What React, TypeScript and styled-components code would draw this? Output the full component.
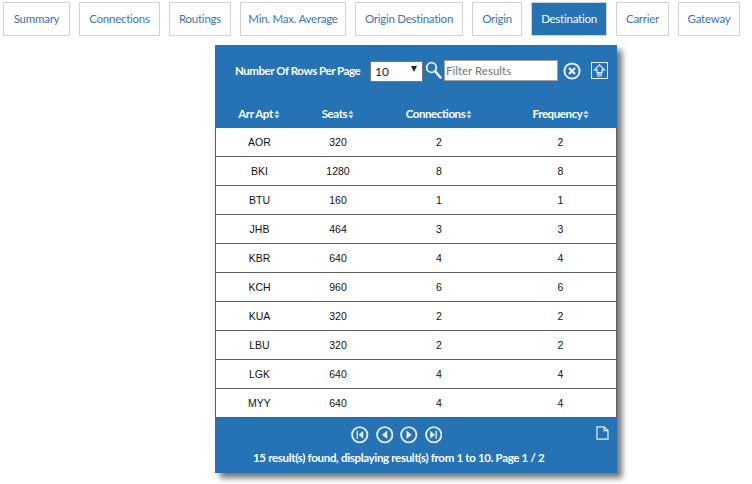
import styled, { createGlobalStyle } from "styled-components";

const tabs = [
  { label: "Summary", width: 67 },
  { label: "Connections", width: 81 },
  { label: "Routings", width: 62 },
  { label: "Min. Max. Average", width: 106 },
  { label: "Origin Destination", width: 108 },
  { label: "Origin", width: 50 },
  { label: "Destination", width: 76 },
  { label: "Carrier", width: 53 },
  { label: "Gateway", width: 62 },
];

const rows = [
  ["AOR", "320", "2", "2"],
  ["BKI", "1280", "8", "8"],
  ["BTU", "160", "1", "1"],
  ["JHB", "464", "3", "3"],
  ["KBR", "640", "4", "4"],
  ["KCH", "960", "6", "6"],
  ["KUA", "320", "2", "2"],
  ["LBU", "320", "2", "2"],
  ["LGK", "640", "4", "4"],
  ["MYY", "640", "4", "4"],
];

const SortIcon = () => (
  <SortSvg viewBox="0 0 6 9" width="6" height="9">
    <path d="M3 0.5 L5.6 3.8 H0.4 Z M3 8.5 L0.4 5.2 H5.6 Z" fill="#d5e3f0" />
  </SortSvg>
);

const PagerIcon = ({ kind }: { kind: "first" | "prev" | "next" | "last" }) => (
  <svg viewBox="0 0 18 18" width="17.5" height="17.5" fill="none">
    <circle cx="9" cy="9" r="7.9" stroke="#e6eff7" strokeWidth="1.9" />
    {kind === "first" && <path d="M5.8 5 V13 H7.2 V5 Z M12.6 4.8 L7.8 9 L12.6 13.2 Z" fill="#e6eff7" />}
    {kind === "prev" && <path d="M11.6 4.6 L6.2 9 L11.6 13.4 Z" fill="#e6eff7" />}
    {kind === "next" && <path d="M6.6 4.6 L12 9 L6.6 13.4 Z" fill="#e6eff7" />}
    {kind === "last" && <path d="M12.2 5 V13 H10.8 V5 Z M5.4 4.8 L10.2 9 L5.4 13.2 Z" fill="#e6eff7" />}
  </svg>
);

export default function App() {
  return (
    <>
      <GlobalStyle />
      <TabBar>
        {tabs.map((t) => (
          <Tab key={t.label} $w={t.width} $active={t.label === "Destination"}>
            {t.label}
          </Tab>
        ))}
      </TabBar>
      <Panel>
        <Toolbar>
          <RowsLabel>Number Of Rows Per Page</RowsLabel>
          <SelectWrap>
            <RowsSelect defaultValue="10">
              <option>10</option>
              <option>25</option>
              <option>50</option>
            </RowsSelect>
            <SelectArrow />
          </SelectWrap>
          <SearchSvg viewBox="0 0 17 18" width="17" height="18" fill="none">
            <circle cx="6.5" cy="6.5" r="4.8" stroke="#e6eff7" strokeWidth="1.8" />
            <path d="M10 10.2 L15.5 16.5" stroke="#e6eff7" strokeWidth="2.6" strokeLinecap="round" />
          </SearchSvg>
          <FilterInput placeholder="Filter Results" />
          <ClearSvg viewBox="0 0 18 18" width="18" height="18" fill="none">
            <circle cx="9" cy="9" r="7.6" stroke="#e6eff7" strokeWidth="2" />
            <path d="M6 6 L12 12 M12 6 L6 12" stroke="#e6eff7" strokeWidth="2.4" />
          </ClearSvg>
          <ExportSvg viewBox="0 0 17 17" width="17" height="17" fill="none">
            <rect x="0.5" y="0.5" width="16" height="16" stroke="#e6eff7" />
            <path d="M8.5 2.8 L13.5 7.8 H11 V10.6 H6 V7.8 H3.5 Z" stroke="#e6eff7" strokeWidth="1.2" />
            <path d="M6 12.2 H11 M6 14 H11" stroke="#e6eff7" strokeWidth="1.2" />
          </ExportSvg>
        </Toolbar>
        <DataTable>
          <colgroup>
            <col style={{ width: 88 }} />
            <col style={{ width: 70 }} />
            <col style={{ width: 132 }} />
            <col />
          </colgroup>
          <thead>
            <tr>
              {["Arr Apt", "Seats", "Connections", "Frequency"].map((h) => (
                <HeadCell key={h}>
                  {h}
                  <SortIcon />
                </HeadCell>
              ))}
            </tr>
          </thead>
          <tbody>
            {rows.map((r) => (
              <tr key={r[0]}>
                {r.map((c, i) => (
                  <BodyCell key={i}>{c}</BodyCell>
                ))}
              </tr>
            ))}
          </tbody>
        </DataTable>
        <Footer>
          <Pager>
            <PagerIcon kind="first" />
            <PagerIcon kind="prev" />
            <PagerIcon kind="next" />
            <PagerIcon kind="last" />
          </Pager>
          <FileSvg viewBox="0 0 13 14" width="13" height="14" fill="none">
            <path d="M1 0.8 H8 L12 4.6 V13.2 H1 Z" stroke="#e6eff7" strokeWidth="1.2" />
            <path d="M8 0.8 V4.6 H12" stroke="#e6eff7" strokeWidth="1.2" />
          </FileSvg>
          <ResultText>15 result(s) found, displaying result(s) from 1 to 10. Page 1 / 2</ResultText>
        </Footer>
      </Panel>
    </>
  );
}

const GlobalStyle = createGlobalStyle`
  body {
    margin: 0;
    min-height: 484px;
    background: #ffffff;
    font-family: Lato, "Liberation Sans", sans-serif;
  }
`;

const TabBar = styled.div`
  display: flex;
  gap: 9px;
  padding: 2px 0 0 3px;
`;

const Tab = styled.div<{ $w: number; $active?: boolean }>`
  box-sizing: border-box;
  width: ${(p) => p.$w}px;
  height: 34px;
  padding-bottom: 1px;
  display: flex;
  align-items: center;
  justify-content: center;
  font-size: 11.5px;
  letter-spacing: -0.25px;
  white-space: nowrap;
  color: ${(p) => (p.$active ? "#ffffff" : "#3a74b4")};
  background: ${(p) => (p.$active ? "#2572b5" : "#ffffff")};
  border: 1px solid #d2d2d2;
`;

const Panel = styled.div`
  box-sizing: border-box;
  width: 402px;
  margin: 9px 0 0 215px;
  background: #2572b5;
  box-shadow: 5px 5px 6px rgba(0, 0, 0, 0.55);
`;

const Toolbar = styled.div`
  display: flex;
  align-items: center;
  height: 51px;
  padding: 0 0 0 20px;
`;

const RowsLabel = styled.span`
  width: 135px;
  font-size: 11.5px;
  font-weight: 700;
  letter-spacing: -0.45px;
  white-space: nowrap;
  color: #ffffff;
`;

const SelectWrap = styled.div`
  position: relative;
  width: 53px;
  height: 21px;
`;

const RowsSelect = styled.select`
  box-sizing: border-box;
  appearance: none;
  width: 100%;
  height: 100%;
  padding: 0 0 0 4px;
  border: 1px solid #767676;
  border-radius: 0;
  background: #ffffff;
  color: #222222;
  font-family: Lato, sans-serif;
  font-size: 12px;
`;

const SelectArrow = styled.span`
  position: absolute;
  top: 6px;
  right: 6px;
  border-left: 3.5px solid transparent;
  border-right: 3.5px solid transparent;
  border-top: 6px solid #222222;
  pointer-events: none;
`;

const SearchSvg = styled.svg`
  margin: -2px 0 0 2px;
`;

const FilterInput = styled.input`
  box-sizing: border-box;
  width: 114px;
  height: 21px;
  margin-left: 2px;
  padding: 0 0 0 1px;
  border: 1px solid #a0a0a0;
  background: #ffffff;
  font-family: Lato, sans-serif;
  font-size: 11.5px;
  outline: none;

  &::placeholder {
    color: #757575;
    opacity: 1;
  }
`;

const ClearSvg = styled.svg`
  margin: 1px 0 0 5px;
`;

const ExportSvg = styled.svg`
  margin-left: 10px;
`;

const DataTable = styled.table`
  width: 100%;
  table-layout: fixed;
  border-collapse: separate;
  border-spacing: 0;
  background: #ffffff;
`;

const HeadCell = styled.th`
  box-sizing: border-box;
  height: 32px;
  padding: 3px 0 0;
  background: #2572b5;
  color: #ffffff;
  font-size: 11.5px;
  font-weight: 700;
  letter-spacing: -0.4px;
  text-align: center;
`;

const SortSvg = styled.svg`
  margin-left: 1px;
  vertical-align: -1px;
`;

const BodyCell = styled.td`
  box-sizing: border-box;
  height: 29px;
  padding: 0;
  border-bottom: 1px solid #5f5f5f;
  color: #111111;
  font-family: "Liberation Sans", Arial, sans-serif;
  font-size: 10.5px;
  text-align: center;

  &:first-child {
    border-left: 1px solid #5f5f5f;
  }

  &:last-child {
    border-right: 1px solid #5f5f5f;
  }
`;

const Footer = styled.div`
  position: relative;
  height: 55px;
`;

const Pager = styled.div`
  display: flex;
  gap: 7px;
  padding: 8px 0 0 136px;
`;

const FileSvg = styled.svg`
  position: absolute;
  top: 8px;
  right: 8px;
`;

const ResultText = styled.div`
  margin: 7px 0 0 38px;
  font-size: 11.5px;
  font-weight: 700;
  letter-spacing: -0.32px;
  white-space: nowrap;
  color: #ffffff;
`;
